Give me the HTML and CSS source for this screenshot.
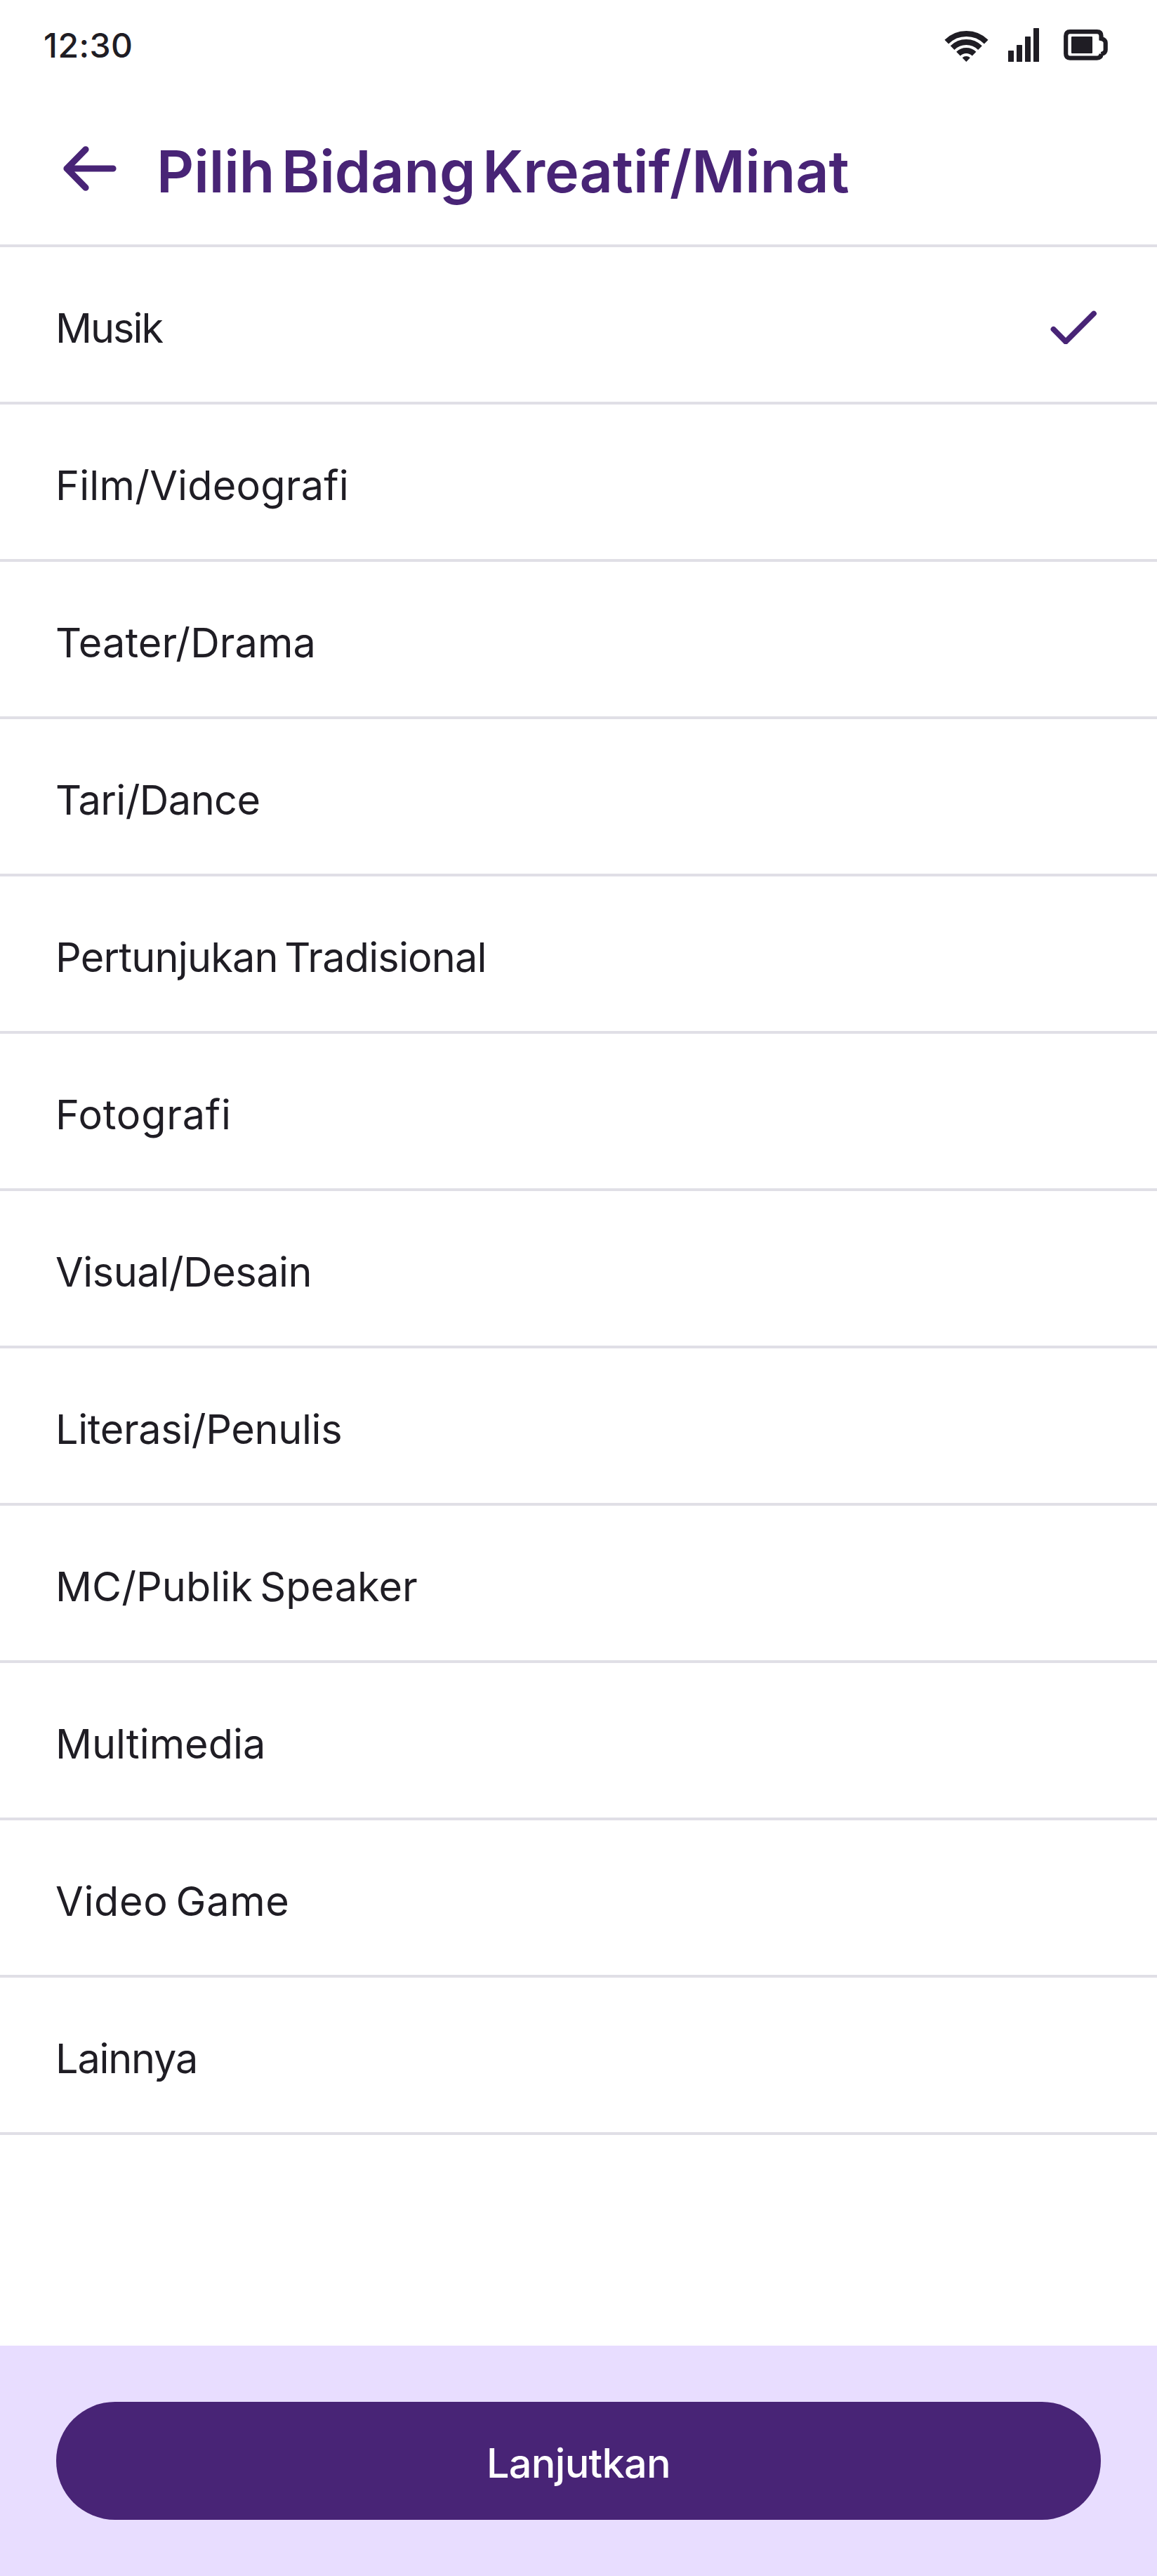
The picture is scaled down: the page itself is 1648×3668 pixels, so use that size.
FILE: index.html
```html
<!DOCTYPE html>
<html lang="id">
<head>
<meta charset="utf-8">
<title>Pilih Bidang Kreatif/Minat</title>
<link rel="stylesheet" href="styles.css">
</head>
<body>
<div class="screen">
  <div class="status-bar">
    <span class="time">12:30</span>
    <div class="status-icons">
      <svg class="icon-wifi" width="64" height="48" viewBox="0 0 64 48" fill="none" stroke="currentColor" stroke-width="8">
        <path d="M4.3 19.7A40 40 0 0 1 60.7 19.7"/>
        <path d="M12.6 28.1A28 28 0 0 1 52 28.1"/>
        <path d="M21 36.6A16 16 0 0 1 43.6 36.6"/>
        <path d="M32.3 48L26.7 42.3A8 8 0 0 1 37.9 42.3Z" fill="currentColor" stroke="none"/>
      </svg>
      <svg class="icon-signal" width="44" height="48" viewBox="0 0 44 48" fill="currentColor">
        <rect x="0" y="32" width="8" height="16" rx="0.5"/>
        <rect x="12" y="24" width="8" height="24" rx="0.5"/>
        <rect x="24" y="12" width="8" height="36" rx="0.5"/>
        <rect x="36" y="0" width="8" height="48" rx="0.5"/>
      </svg>
      <svg class="icon-battery" width="64" height="48" viewBox="0 0 64 48" fill="none">
        <path d="M9 5.2H47.5Q53.5 5.2 53.5 11.2V15Q59.7 16.5 59.7 21V31Q59.7 35.5 53.5 37V36.5Q53.5 42.6 47.5 42.6H9Q3.2 42.6 3.2 36.6V11.2Q3.2 5.2 9 5.2Z" stroke="currentColor" stroke-width="6.2"/>
        <rect x="11" y="12" width="30" height="24" rx="1" fill="currentColor"/>
      </svg>
    </div>
  </div>

  <header class="app-bar">
    <svg class="icon-back" width="80" height="64" viewBox="0 0 80 64" fill="none" stroke="currentColor" stroke-width="9.2" stroke-linecap="round" stroke-linejoin="round">
      <path d="M73 32H7M34 4.8L7.2 32L34 59.2"/>
    </svg>
    <h1 class="title">Pilih Bidang Kreatif/Minat</h1>
  </header>

  <ul class="options">
    <li class="option">
      <span class="label">Musik</span>
      <svg class="icon-check" width="68" height="48" viewBox="0 0 68 48" fill="none" stroke="currentColor" stroke-width="7.8" stroke-linecap="round" stroke-linejoin="round">
        <path d="M4.5 26.8L22 44.4L62 4.6"/>
      </svg>
    </li>
    <li class="option"><span class="label">Film/Videografi</span></li>
    <li class="option"><span class="label">Teater/Drama</span></li>
    <li class="option"><span class="label">Tari/Dance</span></li>
    <li class="option"><span class="label">Pertunjukan Tradisional</span></li>
    <li class="option"><span class="label">Fotografi</span></li>
    <li class="option"><span class="label">Visual/Desain</span></li>
    <li class="option"><span class="label">Literasi/Penulis</span></li>
    <li class="option"><span class="label">MC/Publik Speaker</span></li>
    <li class="option"><span class="label">Multimedia</span></li>
    <li class="option"><span class="label">Video Game</span></li>
    <li class="option"><span class="label">Lainnya</span></li>
  </ul>

  <footer class="footer">
    <button class="continue" type="button">Lanjutkan</button>
  </footer>
</div>
</body>
</html>
```
FILE: styles.css
```css
* { box-sizing: border-box; }

body {
  margin: 0;
  background: #fff;
  color: #1f1d24;
  font-family: Inter, "Liberation Sans", sans-serif;
}

svg { display: block; flex: none; }

.screen {
  display: flex;
  flex-direction: column;
  height: 3668px;
}

.status-bar {
  display: flex;
  align-items: center;
  justify-content: space-between;
  height: 128px;
  padding: 0 69px 0 62px;
}

.time {
  font-size: 48px;
  font-weight: 500;
  letter-spacing: 0.46px;
}

.status-icons { display: flex; align-items: center; }
.icon-signal { margin: 0 35px 0 28px; }

.app-bar {
  display: flex;
  align-items: center;
  height: 224px;
  padding: 4px 80px 0 88px;
  border-bottom: 4px solid #e0dfe6;
  color: #482476;
}

.title {
  margin: 0 0 0 55px;
  padding-top: 8px;
  font-size: 82.5px;
  font-weight: 600;
  letter-spacing: -0.06px;
  word-spacing: -11px;
  white-space: nowrap;
}

.options {
  margin: 0;
  padding: 0;
  list-style: none;
}

.option {
  display: flex;
  align-items: center;
  justify-content: space-between;
  height: 224px;
  padding: 0 84px 0 79px;
  border-bottom: 4px solid #e0dfe6;
}

.label {
  padding-top: 10px;
  font-size: 57.6px;
  word-spacing: -6px;
  white-space: nowrap;
}

.option:nth-child(1) .label { letter-spacing: -2px; }
.option:nth-child(2) .label { letter-spacing: 0.21px; }
.option:nth-child(3) .label { letter-spacing: 0.09px; }
.option:nth-child(4) .label { letter-spacing: -0.55px; }
.option:nth-child(5) .label { letter-spacing: -0.8px; }
.option:nth-child(6) .label { letter-spacing: 0.77px; }
.option:nth-child(7) .label { letter-spacing: -0.45px; }
.option:nth-child(8) .label { letter-spacing: -0.36px; }
.option:nth-child(9) .label { letter-spacing: 0.05px; }
.option:nth-child(11) .label { letter-spacing: 0.7px; }
.option:nth-child(12) .label { letter-spacing: -1.19px; }

.icon-check { margin-top: 8px; color: #482476; }

.footer {
  height: 328px;
  margin-top: auto;
  padding: 80px;
  background: #e8ddff;
}

.continue {
  display: block;
  width: 100%;
  height: 168px;
  padding: 6px 0 0;
  border: 0;
  border-radius: 84px;
  background: #482476;
  color: #fff;
  font-family: inherit;
  font-size: 57.6px;
  font-weight: 500;
  letter-spacing: -0.7px;
}
```
